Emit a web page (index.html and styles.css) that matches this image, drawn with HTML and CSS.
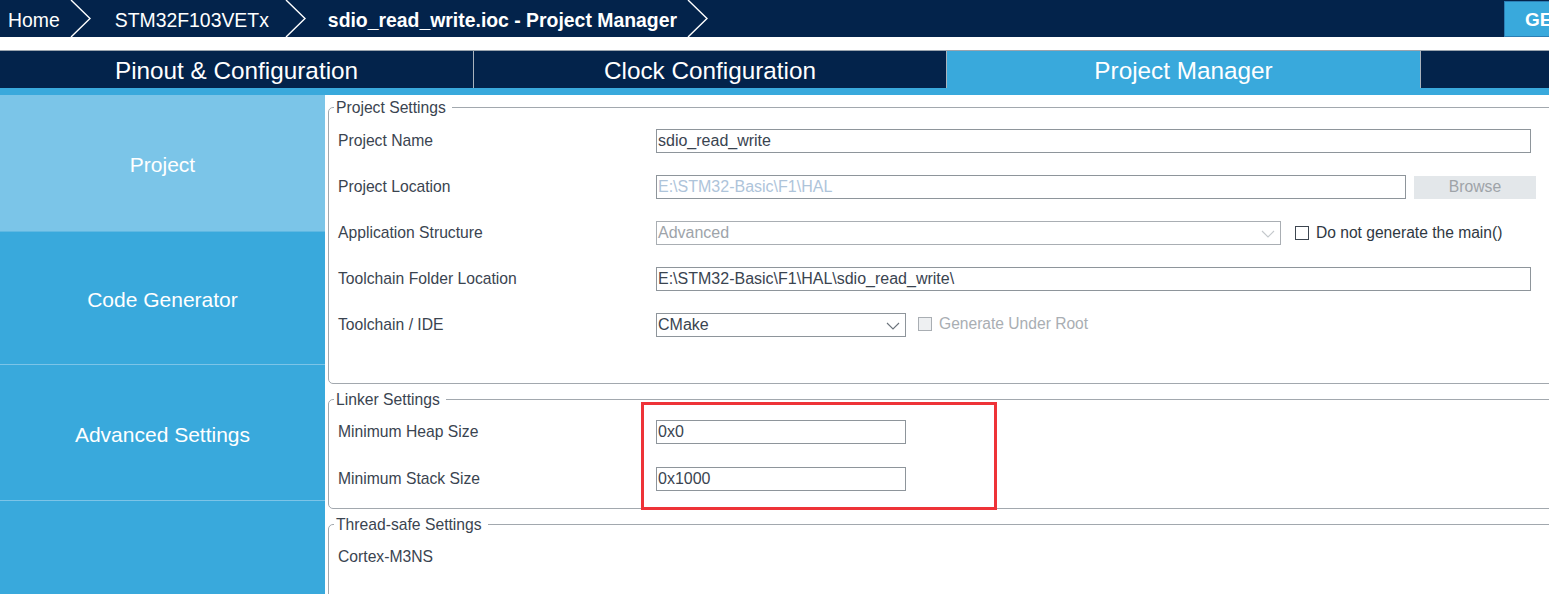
FILE: index.html
```html
<!DOCTYPE html>
<html>
<head>
<meta charset="utf-8">
<link rel="stylesheet" href="styles.css">
</head>
<body>
<header class="topbar">
  <nav class="crumbs">
    <span class="crumb crumb-home">Home</span>
    <svg class="chev" width="22" height="37" viewBox="0 0 22 37"><polyline points="1,0 20,18.5 1,37" fill="none" stroke="#fff" stroke-width="1.4"/></svg>
    <span class="crumb crumb-mcu">STM32F103VETx</span>
    <svg class="chev" width="22" height="37" viewBox="0 0 22 37"><polyline points="1,0 20,18.5 1,37" fill="none" stroke="#fff" stroke-width="1.4"/></svg>
    <span class="crumb crumb-file">sdio_read_write.ioc - Project Manager</span>
    <svg class="chev" width="22" height="37" viewBox="0 0 22 37"><polyline points="1,0 20,18.5 1,37" fill="none" stroke="#fff" stroke-width="1.4"/></svg>
  </nav>
  <button class="gen-btn">GENERATE CODE</button>
</header>

<div class="tabs">
  <div class="tab tab-first">Pinout &amp; Configuration</div>
  <div class="tab">Clock Configuration</div>
  <div class="tab tab-active">Project Manager</div>
  <div class="tab tab-rest"></div>
</div>
<div class="tab-strip"></div>

<main class="main">
  <aside class="sidebar">
    <div class="side-item side-active">Project</div>
    <div class="side-item side-code">Code Generator</div>
    <div class="side-item">Advanced Settings</div>
    <div class="side-item side-last"></div>
  </aside>

  <section class="content">
    <fieldset class="group group-project">
      <legend>Project Settings</legend>
      <div class="row">
        <span class="label">Project Name</span>
        <div class="field field-wide">sdio_read_write</div>
      </div>
      <div class="row">
        <span class="label">Project Location</span>
        <div class="field field-loc disabled-text">E:\STM32-Basic\F1\HAL</div>
        <button class="browse">Browse</button>
      </div>
      <div class="row">
        <span class="label">Application Structure</span>
        <div class="field select select-app disabled-grey">Advanced
          <svg class="caret" width="14" height="8" viewBox="0 0 14 8"><polyline points="1,1 7,7 13,1" fill="none" stroke="#c4c8cc" stroke-width="1.1"/></svg>
        </div>
        <span class="check check-main"></span>
        <span class="check-label">Do not generate the main()</span>
      </div>
      <div class="row">
        <span class="label">Toolchain Folder Location</span>
        <div class="field field-wide">E:\STM32-Basic\F1\HAL\sdio_read_write\</div>
      </div>
      <div class="row">
        <span class="label">Toolchain / IDE</span>
        <div class="field select select-ide">CMake
          <svg class="caret" width="14" height="8" viewBox="0 0 14 8"><polyline points="1,1 7,7 13,1" fill="none" stroke="#6b737b" stroke-width="1.1"/></svg>
        </div>
        <span class="check check-disabled"></span>
        <span class="check-label check-label-disabled">Generate Under Root</span>
      </div>
    </fieldset>

    <fieldset class="group group-linker">
      <legend>Linker Settings</legend>
      <div class="row row-linker">
        <span class="label">Minimum Heap Size</span>
        <div class="field field-short">0x0</div>
      </div>
      <div class="row row-linker">
        <span class="label">Minimum Stack Size</span>
        <div class="field field-short">0x1000</div>
      </div>
    </fieldset>

    <fieldset class="group group-thread">
      <legend>Thread-safe Settings</legend>
      <div class="row row-thread">
        <span class="label">Cortex-M3NS</span>
      </div>
    </fieldset>
  </section>
</main>

<div class="highlight"></div>
</body>
</html>
```

FILE: styles.css
```css
* { box-sizing: border-box; }

html, body {
  margin: 0;
  padding: 0;
}

body {
  position: relative;
  width: 1549px;
  height: 594px;
  overflow: hidden;
  background: #ffffff;
  font-family: "Liberation Sans", Arial, sans-serif;
  color: #3a4450;
}

/* ---------- top bar ---------- */
.topbar {
  display: flex;
  height: 37px;
  background: #03234b;
  overflow: hidden;
}

.crumbs {
  flex: none;
  width: 1504px;
  display: flex;
  align-items: center;
  color: #ffffff;
  font-size: 19.4px;
}

.crumb { white-space: nowrap; padding-top: 3px; }
.crumb-home { margin-left: 8px; margin-right: 10px; }
.crumb-mcu { margin-left: 23px; margin-right: 16px; }
.crumb-file { margin-left: 21px; margin-right: 10px; font-weight: bold; }
.chev { flex: none; display: block; }

.gen-btn {
  flex: none;
  width: 160px;
  height: 36px;
  margin-top: 1px;
  padding: 2px 0 0 20px;
  text-align: left;
  background: #39a9dc;
  border: 1px solid #2b7fb5;
  color: #ffffff;
  font-family: inherit;
  font-size: 19px;
  font-weight: bold;
  white-space: nowrap;
}

/* ---------- tabs ---------- */
.tabs {
  display: flex;
  margin-top: 13px;
  height: 38px;
  border-top: 1px solid #9aa4ae;
  background: #03234b;
}

.tab {
  flex: none;
  width: 473px;
  display: flex;
  align-items: center;
  justify-content: center;
  padding-top: 3px;
  color: #ffffff;
  font-size: 24.3px;
  border-right: 1px solid #a9b3bd;
}

.tab-first { width: 474px; }
.tab-active { width: 474px; background: #39a9dc; }
.tab-rest { flex: 1; border-right: none; }

.tab-strip {
  height: 7px;
  background: #39a9dc;
}

/* ---------- main ---------- */
.main {
  display: flex;
  height: 499px;
}

.sidebar {
  flex: none;
  width: 325px;
  background: #39a9dc;
  display: flex;
  flex-direction: column;
}

.side-item {
  flex: none;
  height: 136px;
  display: flex;
  align-items: center;
  justify-content: center;
  padding-top: 4px;
  color: #ffffff;
  font-size: 21px;
  border-bottom: 1px solid #7cc4e8;
}

.side-active {
  height: 137px;
  background: #7bc5e8;
  border-bottom-color: #5fb8e2;
}

.side-code { height: 133px; }

.side-last { flex: 1; border-bottom: none; }

.content {
  flex: 1;
  padding-left: 3px;
  overflow: hidden;
}

/* ---------- fieldsets ---------- */
.group {
  margin: 0 -12px 0 0;
  padding: 0 0 0 5px;
  border: 1px solid #a2a8ae;
  border-radius: 5px;
  min-width: 0;
}

.group legend {
  padding: 0 6px 0 2px;
  font-size: 15.7px;
  line-height: 17px;
  color: #3a4450;
}

.group-project {
  margin-top: 4px;
  padding-top: 2px;
  padding-bottom: 35px;
}

.group-linker {
  margin-top: 7px;
  padding-bottom: 6px;
}

.group-thread {
  margin-top: 7px;
  height: 120px;
}

.row {
  display: flex;
  align-items: center;
  height: 46px;
  padding-left: 4px;
}

.row-linker { height: 47px; }

.row-thread { height: 28px; margin-top: 10px; }

.label {
  flex: none;
  width: 318px;
  font-size: 15.7px;
  color: #3a4450;
}

.field {
  flex: none;
  height: 24px;
  border: 1px solid #8e959b;
  background: #ffffff;
  font-size: 16px;
  line-height: 22px;
  padding-left: 1px;
  color: #3a4450;
  white-space: nowrap;
  position: relative;
}

.field-wide { width: 875px; }
.field-loc { width: 750px; }
.field-short { width: 250px; }

.disabled-text { color: #aec4da; }
.disabled-grey { color: #9ea4aa; border-color: #a9aeb3; }

.select-app { width: 625px; }
.select-ide { width: 250px; }

.caret {
  position: absolute;
  right: 5px;
  top: 8px;
}

.browse {
  flex: none;
  width: 122px;
  height: 23px;
  margin-left: 8px;
  border: none;
  background: #e3e7ea;
  color: #9ea3a8;
  font-family: inherit;
  font-size: 15.7px;
  padding: 0;
}

.check {
  flex: none;
  width: 14px;
  height: 14px;
  border: 1px solid #3d4650;
  margin-left: 14px;
  background: #ffffff;
}

.check-disabled {
  margin-left: 12px;
  border-color: #a9aeb3;
  background: #eef0f2;
  margin-top: -3px;
}

.check-label {
  margin-left: 7px;
  font-size: 15.6px;
  color: #2f3842;
  white-space: nowrap;
}

.check-label-disabled {
  color: #a9aeb3;
  margin-top: -3px;
}

/* ---------- annotation overlay ---------- */
.highlight {
  position: absolute;
  left: 641px;
  top: 402px;
  width: 356px;
  height: 108px;
  border: 3px solid #ee3338;
  pointer-events: none;
}
```
